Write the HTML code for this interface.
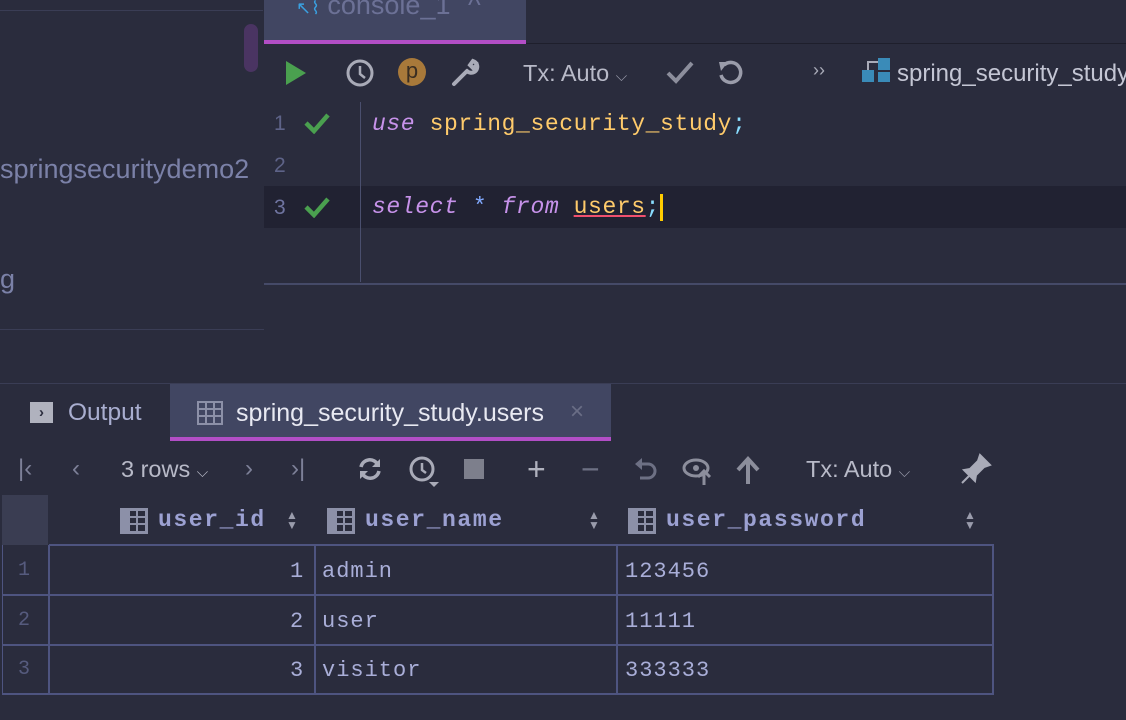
<!DOCTYPE html>
<html><head><meta charset="utf-8"><style>
*{margin:0;padding:0;box-sizing:border-box}
body{width:1126px;height:720px;background:#2a2c3d;position:relative;overflow:hidden;font-family:"Liberation Sans",sans-serif;}
.a{position:absolute}
.mono{font-family:"Liberation Mono","DejaVu Sans Mono",monospace}
.code{font-size:23px;letter-spacing:0.6px;white-space:pre;font-style:italic}
.hl{height:1px;background:#3a3d55}
.cell{position:absolute;font-size:22px;letter-spacing:1px;color:#a9aed8;font-family:"Liberation Mono",monospace}
.rn{position:absolute;font-size:20px;color:#565b7e;font-family:"Liberation Mono",monospace}
</style></head><body>
<!-- left panel -->
<div class="a hl" style="left:0;top:10px;width:263px"></div>
<div class="a" style="left:244px;top:24px;width:14px;height:48px;border-radius:7px;background:#4a3462"></div>
<div class="a" style="left:0;top:154px;font-size:27px;color:#7b81a8;white-space:nowrap;width:263px;overflow:hidden">springsecuritydemo2</div>
<div class="a" style="left:0;top:264px;font-size:27px;color:#7b81a8">g</div>
<div class="a hl" style="left:0;top:329px;width:264px"></div>
<div class="a hl" style="left:0;top:383px;width:1126px"></div>

<!-- editor tab -->
<div class="a" style="left:264px;top:0;width:262px;height:40px;background:#414662"></div>
<div class="a" style="left:264px;top:40px;width:262px;height:4px;background:#b24ec6"></div>
<div class="a" style="left:296px;top:-10px;font-size:27px;color:#6c7196;white-space:nowrap"><span style="color:#3aa0e0;font-size:18px">↖⌇</span> console_1 <span style="margin-left:10px">^</span></div>
<div class="a" style="left:526px;top:43px;width:600px;height:1px;background:#1e1f2c"></div>

<!-- toolbar -->
<svg class="a" style="left:284px;top:60px" width="24" height="26"><polygon points="2,1 22,13 2,25" fill="#4aa04f"/></svg>
<svg class="a" style="left:345px;top:58px" width="30" height="30"><circle cx="15" cy="15" r="12" fill="none" stroke="#a9abb8" stroke-width="3"/><path d="M15 8v8l5 4" fill="none" stroke="#a9abb8" stroke-width="2.5"/></svg>
<div class="a" style="left:398px;top:58px;width:28px;height:28px;border-radius:50%;background:#a8793a;color:#3a2e22;font-size:22px;text-align:center;line-height:26px">p</div>
<svg class="a" style="left:450px;top:58px" width="30" height="30"><path d="M4 26 L17 13 M17 13 a6 6 0 1 0 6-10 l-3 4 3 3 4-3 a6 6 0 0 1 -10 6" fill="none" stroke="#a9abb8" stroke-width="4" stroke-linecap="round"/></svg>
<div class="a" style="left:523px;top:60px;font-size:23.5px;color:#b8bac8;white-space:nowrap">Tx: Auto <span style="font-size:15px;color:#9a9cac">⌵</span></div>
<svg class="a" style="left:665px;top:60px" width="30" height="26"><path d="M3 13 L11 21 L27 3" fill="none" stroke="#8c8e9c" stroke-width="4"/></svg>
<svg class="a" style="left:716px;top:59px" width="28" height="28"><path d="M8 6 A10 10 0 1 1 5 16" fill="none" stroke="#9a9caa" stroke-width="3.5"/><polygon points="3,3 12,3 5,12" fill="#9a9caa"/></svg>
<div class="a" style="left:813px;top:60px;font-size:18px;color:#a9abb8">››</div>
<svg class="a" style="left:862px;top:58px" width="30" height="28"><rect x="0" y="12" width="12" height="12" fill="#3a8bb8"/><rect x="16" y="0" width="12" height="12" fill="#3a8bb8"/><rect x="16" y="14" width="12" height="10" fill="#3a8bb8"/><path d="M6 12V4h10" stroke="#a9abb8" stroke-width="2" fill="none"/></svg>
<div class="a" style="left:897px;top:60px;font-size:24px;color:#c4c6d4;white-space:nowrap">spring_security_study</div>

<!-- code area -->
<div class="a" style="left:264px;top:186px;width:862px;height:42px;background:#212232"></div>
<div class="a" style="left:360px;top:102px;width:1px;height:180px;background:#4a4f6e"></div>
<div class="a" style="left:264px;top:283px;width:862px;height:2px;background:#454a68"></div>
<div class="a" style="left:274px;top:112px;font-size:21px;color:#5e6388">1</div>
<div class="a" style="left:274px;top:154px;font-size:21px;color:#5e6388">2</div>
<div class="a" style="left:274px;top:196px;font-size:21px;color:#6f74a0">3</div>
<svg class="a" style="left:304px;top:112px" width="26" height="22"><path d="M2 11 L10 19 L24 3" fill="none" stroke="#4aa04f" stroke-width="4.5"/></svg>
<svg class="a" style="left:304px;top:196px" width="26" height="22"><path d="M2 11 L10 19 L24 3" fill="none" stroke="#4aa04f" stroke-width="4.5"/></svg>
<div class="a mono code" style="left:372px;top:111px"><span style="color:#c792ea">use</span> <span style="color:#ffcb6b;font-style:normal">spring_security_study</span><span style="color:#89ddff;font-style:normal">;</span></div>
<div class="a mono code" style="left:372px;top:194px"><span style="color:#c792ea">select</span> <span style="color:#82aaff;font-style:normal">*</span> <span style="color:#c792ea">from</span> <span style="color:#ffcb6b;font-style:normal;text-decoration:underline;text-decoration-color:#f0506e">users</span><span style="color:#89ddff;font-style:normal">;</span></div>
<div class="a" style="left:660px;top:194px;width:3px;height:27px;background:#ffcc00"></div>

<!-- bottom tabs -->
<div class="a" style="left:170px;top:384px;width:441px;height:53px;background:#414662"></div>
<div class="a" style="left:170px;top:437px;width:441px;height:4px;background:#b24ec6"></div>
<div class="a" style="left:30px;top:402px;width:23px;height:21px;background:#b0b2be;color:#2a2c3d;font-size:15px;font-weight:bold;text-align:center;line-height:21px">›</div>
<div class="a" style="left:68px;top:399px;font-size:24.5px;color:#a9aed0">Output</div>
<svg class="a" style="left:197px;top:401px" width="26" height="24"><rect x="1" y="1" width="24" height="22" fill="none" stroke="#8c90a8" stroke-width="2"/><path d="M1 8h24M1 15h24M9 1v22M17 1v22" stroke="#8c90a8" stroke-width="2"/></svg>
<div class="a" style="left:236px;top:399px;font-size:25px;color:#e8e9f2;white-space:nowrap">spring_security_study.users</div>
<div class="a" style="left:570px;top:398px;font-size:24px;color:#6a6e86">×</div>

<!-- result toolbar -->
<div class="a" style="left:18px;top:455px;font-size:24px;color:#7d8098;white-space:nowrap">|‹</div>
<div class="a" style="left:72px;top:455px;font-size:24px;color:#7d8098">‹</div>
<div class="a" style="left:121px;top:456px;font-size:23.5px;color:#b8bac8;white-space:nowrap">3 rows <span style="font-size:15px">⌵</span></div>
<div class="a" style="left:245px;top:455px;font-size:24px;color:#7d8098">›</div>
<div class="a" style="left:291px;top:455px;font-size:24px;color:#7d8098">›|</div>
<svg class="a" style="left:357px;top:456px" width="26" height="26"><path d="M21 9 A9 9 0 0 0 4 11 M5 17 A9 9 0 0 0 22 15" fill="none" stroke="#a9abb8" stroke-width="3.5"/><polygon points="23,3 23,11 15,11" fill="#a9abb8"/><polygon points="3,23 3,15 11,15" fill="#a9abb8"/></svg>
<svg class="a" style="left:408px;top:454px" width="34" height="34"><circle cx="14" cy="15" r="11" fill="none" stroke="#a9abb8" stroke-width="3"/><path d="M14 9v7l4 3" fill="none" stroke="#a9abb8" stroke-width="2.5"/><polygon points="21,28 31,28 26,33" fill="#a9abb8"/></svg>
<div class="a" style="left:464px;top:459px;width:20px;height:20px;background:#7d7f8c"></div>
<div class="a" style="left:527px;top:451px;font-size:32px;color:#b0b2be">+</div>
<div class="a" style="left:581px;top:451px;font-size:32px;color:#6d7084">−</div>
<svg class="a" style="left:632px;top:456px" width="28" height="28"><path d="M8 8 h8 a7 7 0 0 1 0 14 h-8" fill="none" stroke="#6d7084" stroke-width="3"/><polygon points="3,8 10,2 10,14" fill="#6d7084"/></svg>
<svg class="a" style="left:682px;top:455px" width="32" height="30"><ellipse cx="14" cy="13" rx="12" ry="8" fill="none" stroke="#8c8e9c" stroke-width="3"/><circle cx="14" cy="13" r="3" fill="#8c8e9c"/><path d="M22 30v-12 M16 22l6-6 6 6" fill="none" stroke="#8c8e9c" stroke-width="3"/></svg>
<svg class="a" style="left:735px;top:456px" width="26" height="28"><path d="M13 28V6 M3 14l10-11 10 11" fill="none" stroke="#8c8e9c" stroke-width="4"/></svg>
<div class="a" style="left:806px;top:456px;font-size:23.5px;color:#b8bac8;white-space:nowrap">Tx: Auto <span style="font-size:15px;color:#9a9cac">⌵</span></div>
<svg class="a" style="left:960px;top:453px" width="32" height="32"><path d="M20 2 L30 12 L24 14 L16 22 L15 28 L4 17 L10 16 L18 8 Z M9 23 L2 30" fill="#a9abb8" stroke="#a9abb8" stroke-width="2"/></svg>

<!-- table -->
<div class="a" style="left:2px;top:495px;width:46px;height:50px;background:#3a3d52"></div>
<svg class="a" style="left:120px;top:508px" width="28" height="26"><rect x="0" y="0" width="28" height="26" fill="#8c90a8"/><rect x="10" y="3" width="15" height="20" fill="#2a2c3d"/><path d="M10 9h15M10 16h15M17 3v20" stroke="#8c90a8" stroke-width="2"/></svg>
<div class="a mono" style="left:158px;top:507px;font-size:23px;letter-spacing:1.6px;font-weight:bold;color:#9ca1d2">user_id</div>
<div class="a" style="left:286px;top:510px;font-size:12px;color:#9a9cac;line-height:10px">▲<br>▼</div>
<svg class="a" style="left:327px;top:508px" width="28" height="26"><rect x="0" y="0" width="28" height="26" fill="#8c90a8"/><rect x="10" y="3" width="15" height="20" fill="#2a2c3d"/><path d="M10 9h15M10 16h15M17 3v20" stroke="#8c90a8" stroke-width="2"/></svg>
<div class="a mono" style="left:365px;top:507px;font-size:23px;letter-spacing:1.6px;font-weight:bold;color:#9ca1d2">user_name</div>
<div class="a" style="left:588px;top:510px;font-size:12px;color:#9a9cac;line-height:10px">▲<br>▼</div>
<svg class="a" style="left:628px;top:508px" width="28" height="26"><rect x="0" y="0" width="28" height="26" fill="#8c90a8"/><rect x="10" y="3" width="15" height="20" fill="#2a2c3d"/><path d="M10 9h15M10 16h15M17 3v20" stroke="#8c90a8" stroke-width="2"/></svg>
<div class="a mono" style="left:666px;top:507px;font-size:23px;letter-spacing:1.6px;font-weight:bold;color:#9ca1d2">user_password</div>
<div class="a" style="left:964px;top:510px;font-size:12px;color:#9a9cac;line-height:10px">▲<br>▼</div>

<div class="a" style="left:49px;top:544px;width:945px;height:2px;background:#4e5480"></div>
<div class="a" style="left:2px;top:594px;width:992px;height:2px;background:#4e5480"></div>
<div class="a" style="left:2px;top:644px;width:992px;height:2px;background:#4e5480"></div>
<div class="a" style="left:2px;top:693px;width:992px;height:2px;background:#4e5480"></div>
<div class="a" style="left:2px;top:545px;width:1px;height:150px;background:#4e5480"></div>
<div class="a" style="left:48px;top:545px;width:2px;height:150px;background:#4e5480"></div>
<div class="a" style="left:314px;top:545px;width:2px;height:150px;background:#4e5480"></div>
<div class="a" style="left:616px;top:545px;width:2px;height:150px;background:#4e5480"></div>
<div class="a" style="left:992px;top:545px;width:2px;height:150px;background:#4e5480"></div>

<div class="rn" style="left:18px;top:559px">1</div>
<div class="rn" style="left:18px;top:609px">2</div>
<div class="rn" style="left:18px;top:658px">3</div>
<div class="cell" style="left:290px;top:559px">1</div>
<div class="cell" style="left:290px;top:609px">2</div>
<div class="cell" style="left:290px;top:658px">3</div>
<div class="cell" style="left:322px;top:559px">admin</div>
<div class="cell" style="left:322px;top:609px">user</div>
<div class="cell" style="left:322px;top:658px">visitor</div>
<div class="cell" style="left:625px;top:559px">123456</div>
<div class="cell" style="left:625px;top:609px">11111</div>
<div class="cell" style="left:625px;top:658px">333333</div>
</body></html>
